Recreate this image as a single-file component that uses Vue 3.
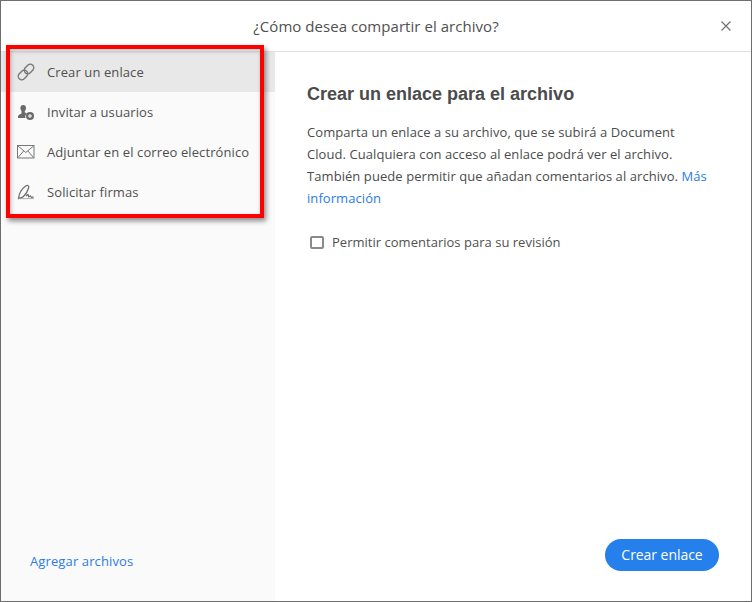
<template>
  <div class="dialog">
    <header class="top">
      <h1 class="title">¿Cómo desea compartir el archivo?</h1>
      <button class="close" aria-label="Cerrar">
        <svg width="12" height="12" viewBox="0 0 12 12"><path d="M1.500 1.500l9 9M10.500 1.500l-9 9" stroke="#6e6e6e" stroke-width="1.100" fill="none"/></svg>
      </button>
    </header>
    <div class="body">
      <aside class="side">
        <nav class="menu">
          <a v-for="(item, i) in items" :key="item.label" class="row" :class="{ active: i === 0 }">
            <svg class="ico" width="18" height="18" viewBox="0 0 18 18" v-html="item.icon"></svg>
            <span>{{ item.label }}</span>
          </a>
        </nav>
        <a class="add">Agregar archivos</a>
      </aside>
      <main class="main">
        <h2 class="heading">Crear un enlace para el archivo</h2>
        <p class="desc">Comparta un enlace a su archivo, que se subirá a Document<br>Cloud. Cualquiera con acceso al enlace podrá ver el archivo.<br>También puede permitir que añadan comentarios al archivo. <a class="link">Más<br>información</a></p>
        <label class="check"><span class="box"></span><span>Permitir comentarios para su revisión</span></label>
        <div class="foot"><button class="cta">Crear enlace</button></div>
      </main>
    </div>
    <div class="mark"></div>
  </div>
</template>

<script setup>
const items = [
  { label: 'Crear un enlace', icon: '<g transform="rotate(-45 9 9)" fill="none" stroke="#767676" stroke-width="1.400"><rect x="-0.500" y="5.500" width="10.500" height="7" rx="3.500"/><rect x="8" y="5.500" width="10.500" height="7" rx="3.500"/></g>' },
  { label: 'Invitar a usuarios', icon: '<path fill="#6a6a6a" d="M6.200 2c1.800 0 2.800 1.300 2.800 3 0 1.200-.5 2.300-1.200 3v1.500c.8.200 1.500.5 2 .9a4.500 4.500 0 0 0-1.300 4.600H1v-1.500c0-1.500 2-2.500 3.500-3V8C4 7.300 3.400 6.200 3.400 5c0-1.700 1-3 2.800-3z"/><circle cx="13" cy="13" r="4" fill="#6a6a6a"/><path d="M13 11v4M11 13h4" stroke="#fff" stroke-width="1.100"/>' },
  { label: 'Adjuntar en el correo electrónico', icon: '<g fill="none" stroke="#777" stroke-width="1"><rect x="0.500" y="2.500" width="16.500" height="12.500"/><path d="M1 3l7.750 6.500L16.500 3M1 14.500l5.600-6.500M16.500 14.500l-5.600-6.500"/></g>' },
  { label: 'Solicitar firmas', icon: '<g fill="none" stroke="#6f6f6f" stroke-width="1.300"><path d="M1.500 15.500C2 11 4.500 6 9 2.800c1.700-1 3.300.2 2.600 2.200C10.800 7.800 9 11 6.500 13.500c-1 1-3 1.700-5 2z"/><path d="M9 13c.8-1 1.800-1.700 2.300-1.200.4.500-.2 1.700.4 2 .7.300 1.200-1 1.800-.8.500.2.300 1.200 1 1.300.7.100 1.300-.3 2-.3"/><path d="M1.500 15.600H17" stroke-width="0.800" stroke="#999"/></g>' }
]
</script>

<style>
html, body { margin: 0; background: #fff; }
</style>

<style scoped>
.dialog {
  position: relative;
  width: 752px;
  height: 602px;
  box-sizing: border-box;
  border: 1px solid #6e6e6e;
  background: #fff;
  display: flex;
  flex-direction: column;
  font-family: "Open Sans", sans-serif;
  color: #4b4b4b;
  overflow: hidden;
}
.top {
  height: 50px;
  flex: none;
  border-bottom: 1px solid #e1e1e1;
  display: flex;
  align-items: center;
  justify-content: center;
}
.title { margin: 0; font-size: 15px; font-weight: 400; color: #505050; letter-spacing: 0.05px; }
.close {
  position: absolute;
  right: 19px;
  top: 19px;
  width: 12px;
  height: 12px;
  padding: 0;
  border: 0;
  background: none;
  display: flex;
}
.body { flex: 1; display: flex; min-height: 0; }
.side {
  width: 274px;
  flex: none;
  background: #fafafa;
  display: flex;
  flex-direction: column;
  justify-content: space-between;
}
.row {
  height: 40px;
  display: flex;
  align-items: center;
  gap: 12px;
  padding-left: 16px;
  font-size: 13px;
  letter-spacing: 0.1px;
  color: #505050;
}
.row.active { background: #e8e8e8; }
.ico { flex: none; }
.add { margin: 0 0 31px 29px; font-size: 13px; letter-spacing: 0.12px; color: #2c7be5; }
.main {
  flex: 1;
  padding: 32px 32px 30px 32px;
  display: flex;
  flex-direction: column;
}
.heading { margin: 0; font: 700 18px/20px "Liberation Sans", sans-serif; color: #4b4b4b; }
.desc { margin: 17px 0 0; font-size: 13px; line-height: 22px; letter-spacing: 0.07px; color: #4b4b4b; }
.link { color: #2c7be5; }
.check { margin-top: 24px; display: flex; align-items: center; gap: 8px; font-size: 13px; letter-spacing: 0.02px; color: #505050; }
.box { width: 10px; height: 9px; border: 2px solid #8a8a8a; border-radius: 2px; margin-left: 3px; }
.foot { margin-top: auto; display: flex; justify-content: flex-end; }
.cta {
  width: 114px;
  height: 32px;
  border: 0;
  border-radius: 16px;
  background: #2680eb;
  color: #fff;
  font: 400 14px "Open Sans", sans-serif;
  letter-spacing: -0.05px;
  padding: 0 0 2px;
}
.mark {
  position: absolute;
  left: 5px;
  top: 44px;
  width: 250px;
  height: 165px;
  border: 4px solid #ff0000;
  box-shadow: 2px 3px 5px rgba(0,0,0,.45), inset 1px 2px 4px rgba(0,0,0,.25);
  pointer-events: none;
}
</style>
